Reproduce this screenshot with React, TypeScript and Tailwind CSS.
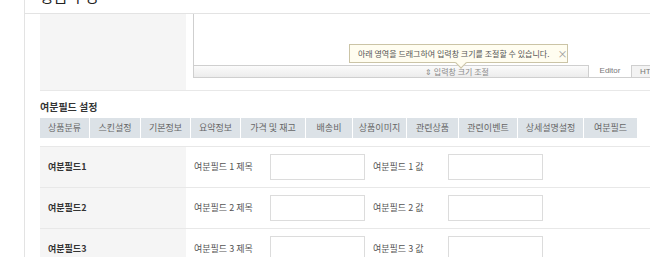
import React from "react";

const tabs = [
  { label: "상품분류", w: "w-[50px]" },
  { label: "스킨설정", w: "w-[51px]" },
  { label: "기본정보", w: "w-[50px]" },
  { label: "요약정보", w: "w-[50px]" },
  { label: "가격 및 재고", w: "w-[65px]" },
  { label: "배송비", w: "w-[47px]" },
  { label: "상품이미지", w: "w-[54px]" },
  { label: "관련상품", w: "w-[52px]" },
  { label: "관련이벤트", w: "w-[59px]" },
  { label: "상세설명설정", w: "w-[66px]" },
  { label: "여분필드", w: "w-[54px]" },
];

const rows = [1, 2, 3];

function ExtraFieldRow({ n }: { n: number }) {
  return (
    <div className="flex h-[41px] border-b border-[#e8e8e8]">
      <div className="w-[146px] shrink-0 bg-[#f5f5f5] pl-[8px] flex items-center text-[9px] font-bold text-[#333]">
        여분필드{n}
      </div>
      <div className="flex items-center pl-[8px] text-[9px] text-[#555]">
        <span className="w-[76px] shrink-0">여분필드 {n} 제목</span>
        <input className="w-[95px] h-[26px] border border-[#dcdcdc] bg-white outline-none" />
        <span className="w-[83px] shrink-0 pl-[8px]">여분필드 {n} 값</span>
        <input className="w-[95px] h-[26px] border border-[#dcdcdc] bg-white outline-none" />
      </div>
    </div>
  );
}

export default function App() {
  return (
    <div className="w-[650px] h-[257px] overflow-hidden bg-white font-['Noto_Sans_CJK_KR',sans-serif]">
      <div className="ml-[24px] border-l border-[#e3e3e3] min-h-[257px]">
        {/* 페이지 제목 (위로 잘림) */}
        <div className="h-[14px] border-b border-[#e3e3e3] overflow-hidden pl-[15px]">
          <div className="-mt-[13px] text-[15px] leading-[18px] text-[#222]">상품 수정</div>
        </div>

        <div className="pl-[15px]">
          {/* 상세설명 에디터 행 */}
          <div className="flex h-[77px] border-b border-[#e8e8e8]">
            <div className="w-[146px] shrink-0 bg-[#f5f5f5]" />
            <div className="pl-[7px]">
              <div className="relative w-[530px] h-[64px] border border-[#cfcfcf] border-t-0 flex flex-col">
                <div className="flex-1 bg-white" />
                <div className="flex h-[12px] border-t border-[#cfcfcf]">
                  <div className="w-[394px] shrink-0 bg-gradient-to-b from-[#fbfbfb] to-[#ececec] pl-[231px] text-[8px] leading-[11px] text-[#8a8a8a]">
                    ⇕ 입력창 크기 조절
                  </div>
                  <div className="w-[44px] shrink-0 bg-white border-l border-r border-[#cfcfcf] -mt-px text-center text-[8px] leading-[12px] text-[#777] font-['Liberation_Sans',sans-serif]">
                    Editor
                  </div>
                  <div className="flex-1 bg-[#f3f3f3] border-t border-[#cfcfcf] -mt-px pl-[8px] text-[8px] leading-[12px] text-[#777] font-['Liberation_Sans',sans-serif]">
                    HTML
                  </div>
                </div>

                {/* 말풍선 안내 */}
                <div className="absolute left-[155px] top-[30px] w-[219px] h-[19px] bg-[#fffdf0] border border-[#cbc4a6] flex items-center pl-[8px] text-[8px] text-[#555] whitespace-nowrap">
                  <span>아래 영역을 드래그하여 입력창 크기를 조절할 수 있습니다.</span>
                  <span className="ml-[8px] text-[10px] leading-none text-[#999]">×</span>
                  <div className="absolute left-[107px] -bottom-[5px] w-[8px] h-[8px] bg-[#fffdf0] border-r border-b border-[#cbc4a6] rotate-45" />
                </div>
              </div>
            </div>
          </div>

          {/* 여분필드 설정 */}
          <div className="pt-[8px] text-[10px] leading-[16px] font-bold text-[#333]">여분필드 설정</div>

          <div className="mt-[3px] flex h-[20px]">
            {tabs.map((t) => (
              <div
                key={t.label}
                className={`${t.w} shrink-0 bg-[#dce2e7] border-r border-white flex items-center justify-center text-[9px] text-[#666] whitespace-nowrap`}
              >
                {t.label}
              </div>
            ))}
          </div>

          <div className="mt-[8px] border-t border-[#e8e8e8]">
            {rows.map((n) => (
              <ExtraFieldRow key={n} n={n} />
            ))}
          </div>
        </div>
      </div>
    </div>
  );
}
